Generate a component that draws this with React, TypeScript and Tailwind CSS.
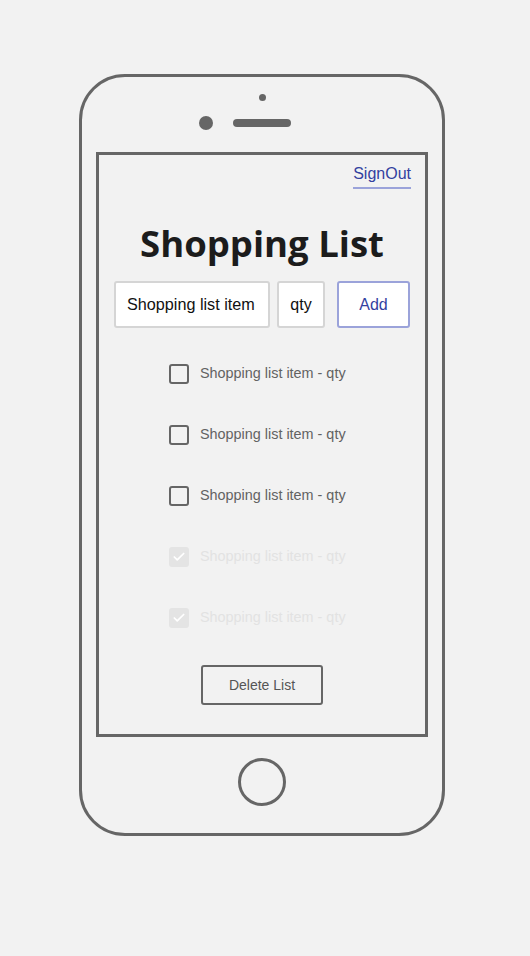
import { Check } from 'lucide-react';

const items = [
  { label: 'Shopping list item - qty', done: false },
  { label: 'Shopping list item - qty', done: false },
  { label: 'Shopping list item - qty', done: false },
  { label: 'Shopping list item - qty', done: true },
  { label: 'Shopping list item - qty', done: true },
];

export default function App() {
  return (
    <div className="min-h-[956px] w-[530px] bg-[#f2f2f2] pt-[74px] pl-[79px] font-['Liberation_Sans',Arial,sans-serif]">
      {/* phone body */}
      <div className="flex h-[762px] w-[366px] flex-col items-center rounded-[46px] border-[3px] border-[#666]">
        <div className="mt-[17px] h-[7px] w-[7px] rounded-full bg-[#666]" />
        <div className="mt-[15px] grid w-full grid-cols-[1fr_auto_1fr] items-center">
          <div className="mr-[20px] h-[14px] w-[14px] justify-self-end rounded-full bg-[#666]" />
          <div className="h-[8px] w-[58px] rounded-full bg-[#666]" />
          <div />
        </div>

        {/* screen */}
        <div className="mt-[22px] flex h-[585px] w-[332px] flex-col border-[3px] border-[#666]">
          <div className="mt-[9px] flex justify-end pr-[14px]">
            <a className="border-b-2 border-[#9ba3da] pb-[3px] text-[16px] leading-[20px] text-[#3341a0]">SignOut</a>
          </div>

          <h1 className="mt-[32px] text-center font-['Open_Sans',sans-serif] text-[36.5px] leading-[44px] font-bold text-[#1c1c1c]">
            Shopping List
          </h1>

          <div className="mt-[16px] flex px-[15px]">
            <div className="flex h-[47px] w-[156px] items-center rounded-[3px] border-2 border-[#d5d5d5] bg-white pl-[11px] text-[16.2px] text-[#111]">
              Shopping list item
            </div>
            <div className="ml-[7px] flex h-[47px] w-[48px] items-center justify-center rounded-[3px] border-2 border-[#d5d5d5] bg-white text-[16px] text-[#111]">
              qty
            </div>
            <button className="ml-[12px] h-[47px] w-[73px] rounded-[3px] border-2 border-[#9ba3da] bg-white text-[16px] text-[#3341a0]">
              Add
            </button>
          </div>

          <div className="mt-[36px] flex flex-col gap-[41px] pl-[70px]">
            {items.map((it, i) => (
              <div key={i} className="flex h-[20px] items-center">
                {it.done ? (
                  <div className="flex h-[20px] w-[20px] items-center justify-center rounded-[3px] bg-[#e4e4e4]">
                    <Check className="h-[14px] w-[14px] text-white" strokeWidth={3} />
                  </div>
                ) : (
                  <div className="h-[20px] w-[20px] rounded-[3px] border-2 border-[#666]" />
                )}
                <span className={`ml-[11px] text-[14.4px] ${it.done ? 'text-[#e2e2e2]' : 'text-[#626262]'}`}>
                  {it.label}
                </span>
              </div>
            ))}
          </div>

          <button className="mx-auto mt-[37px] h-[40px] w-[122px] rounded-[3px] border-2 border-[#666] text-[14px] text-[#555]">
            Delete List
          </button>
        </div>

        {/* home button */}
        <div className="mt-[21px] h-[48px] w-[48px] rounded-full border-[3px] border-[#666]" />
      </div>
    </div>
  );
}
